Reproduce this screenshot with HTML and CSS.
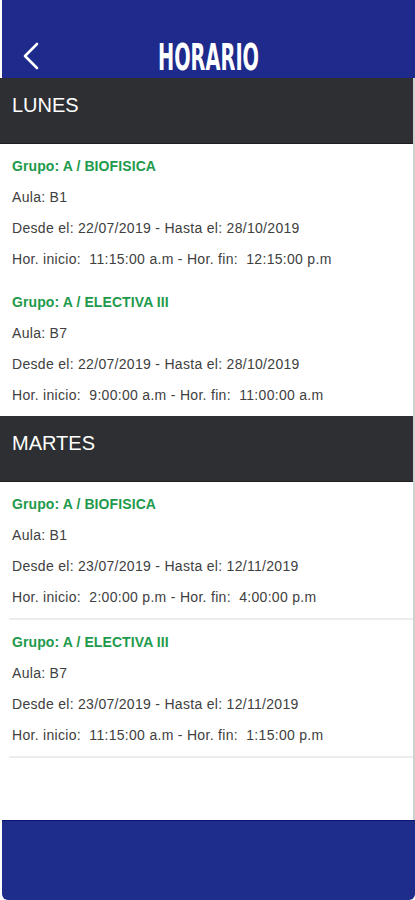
FILE: index.html
```html
<!DOCTYPE html>
<html lang="es">

<head>
    <meta charset="UTF-8">
    <meta name="viewport" content="width=device-width, initial-scale=1.0">
    <title>Horario</title>
    <link rel="stylesheet" href="styles.css">
</head>

<body>

    <div class="app">
        <!-- Top bar -->
        <header class="topbar">
            <a class="back" href="#">
                <svg width="18" height="28" viewBox="0 0 18 28">
                    <polyline points="15,2 3,14 15,26" fill="none" stroke="#fff" stroke-width="2.6"
                        stroke-linecap="round" stroke-linejoin="round" />
                </svg>
            </a>
            <h1 class="title">HORARIO</h1>
        </header>

        <!-- Schedule list -->
        <main class="schedule">
            <section class="day">
                <h2 class="day-title">LUNES</h2>
                <div class="item">
                    <p class="group">Grupo: A / BIOFISICA</p>
                    <p>Aula: B1</p>
                    <p>Desde el: 22/07/2019 - Hasta el: 28/10/2019</p>
                    <p>Hor. inicio:&nbsp; 11:15:00 a.m - Hor. fin:&nbsp; 12:15:00 p.m</p>
                </div>
                <div class="item">
                    <p class="group">Grupo: A / ELECTIVA III</p>
                    <p>Aula: B7</p>
                    <p>Desde el: 22/07/2019 - Hasta el: 28/10/2019</p>
                    <p>Hor. inicio:&nbsp; 9:00:00 a.m - Hor. fin:&nbsp; 11:00:00 a.m</p>
                </div>
            </section>

            <section class="day">
                <h2 class="day-title">MARTES</h2>
                <div class="item item-line">
                    <p class="group">Grupo: A / BIOFISICA</p>
                    <p>Aula: B1</p>
                    <p>Desde el: 23/07/2019 - Hasta el: 12/11/2019</p>
                    <p>Hor. inicio:&nbsp; 2:00:00 p.m - Hor. fin:&nbsp; 4:00:00 p.m</p>
                </div>
                <div class="item item-line">
                    <p class="group">Grupo: A / ELECTIVA III</p>
                    <p>Aula: B7</p>
                    <p>Desde el: 23/07/2019 - Hasta el: 12/11/2019</p>
                    <p>Hor. inicio:&nbsp; 11:15:00 a.m - Hor. fin:&nbsp; 1:15:00 p.m</p>
                </div>
            </section>
        </main>

        <!-- Bottom bar -->
        <footer class="bottombar"></footer>
    </div>

</body>

</html>
```

FILE: styles.css
```css
body {
    font-family: "Liberation Sans", Arial, sans-serif;
    margin: 0;
    padding: 0;
    background-color: #fff;
}

.app {
    display: flex;
    flex-direction: column;
    height: 900px;
}

.topbar {
    height: 78px;
    margin-left: 2px;
    background-color: #1e2b8c;
    display: flex;
    align-items: center;
    justify-content: center;
    position: relative;
}

.back {
    position: absolute;
    left: 20px;
    top: 42px;
    display: block;
    height: 28px;
}

.title {
    margin: 36px 0 0 0;
    color: #fff;
    font-family: "DejaVu Sans Condensed", "DejaVu Sans", sans-serif;
    font-weight: bold;
    font-size: 21.5px;
    letter-spacing: 0;
    transform: scaleY(1.72);
}

.schedule {
    flex: 1;
    border-right: 2px solid #cfcfcf;
}

.day-title {
    margin: 0;
    height: 66px;
    box-sizing: border-box;
    padding: 15px 0 0 12px;
    background-color: #2d2f32;
    border-bottom: 1px solid #1c1d1f;
    color: #fff;
    font-size: 20px;
    font-weight: normal;
    line-height: 24px;
}

.item {
    padding: 7px 0 5px 12px;
}

.item p {
    margin: 0;
    font-size: 14px;
    letter-spacing: 0.3px;
    line-height: 31px;
    color: #404040;
}

.item .group {
    color: #1e9a4c;
    font-weight: bold;
    letter-spacing: 0.1px;
}

.item-line {
    margin-left: 9px;
    padding-left: 3px;
    border-bottom: 2px solid #ececec;
}

.bottombar {
    height: 79px;
    margin-left: 2px;
    background-color: #1e2d8a;
    border-top: 1px solid #0c1672;
    border-radius: 0 0 6px 6px;
}
```
